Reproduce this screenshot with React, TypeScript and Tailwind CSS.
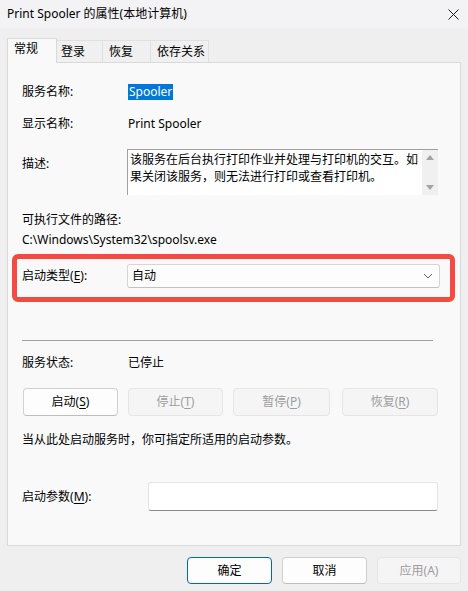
import React from "react";

const font = {
  fontFamily: '"Segoe UI", "Noto Sans", "Noto Sans CJK SC", sans-serif',
};

function Key({ k }: { k: string }) {
  return (
    <>
      (<span className="underline underline-offset-2">{k}</span>)
    </>
  );
}

function Btn({
  children,
  disabled,
  primary,
  className,
}: {
  children: React.ReactNode;
  disabled?: boolean;
  primary?: boolean;
  className?: string;
}) {
  const base =
    "flex items-center justify-center rounded-[4px] border text-[12px] ";
  const look = disabled
    ? "bg-[#f5f5f5] border-[#e5e5e5] text-[#9d9d9d]"
    : primary
    ? "bg-[#fdfdfd] border-[#0067c0] text-black"
    : "bg-[#fdfdfd] border-[#d0d0d0] border-b-[#bdbdbd] text-black";
  return <div className={base + look + " " + (className ?? "")}>{children}</div>;
}

export default function App() {
  return (
    <div
      className="w-[468px] h-[591px] bg-[#efefef] flex flex-col text-[12px] text-black overflow-hidden"
      style={font}
    >
      {/* title bar */}
      <div className="h-[28px] bg-[#f3f3f5] flex items-center justify-between pl-[7px] pr-[9px] shrink-0">
        <span className="text-[12px] leading-none">Print Spooler 的属性(本地计算机)</span>
        <svg width="11" height="11" viewBox="0 0 11 11" className="mt-[1px]">
          <path d="M0.5 0.5L10.5 10.5M10.5 0.5L0.5 10.5" stroke="#1a1a1a" strokeWidth="1" />
        </svg>
      </div>

      {/* tabs */}
      <div className="mt-[10px] h-[25px] flex items-end pl-[7px] shrink-0 relative z-10">
        <div className="w-[50px] h-[25px] bg-[#f9f9f9] border border-b-0 border-[#d9d9d9] pl-[6px] pt-[2px] leading-[16px]">
          常规
        </div>
        <div className="w-[46px] h-[22px] mb-[1px] bg-[#f0f0f0] border border-l-0 border-b-0 border-[#e0e0e0] pl-[4px] pt-[3px] leading-[16px]">
          登录
        </div>
        <div className="w-[48px] h-[22px] mb-[1px] bg-[#f0f0f0] border border-l-0 border-b-0 border-[#e0e0e0] pl-[6px] pt-[3px] leading-[16px]">
          恢复
        </div>
        <div className="w-[58px] h-[22px] mb-[1px] bg-[#f0f0f0] border border-l-0 border-b-0 border-[#e0e0e0] pl-[6px] pt-[3px] leading-[16px]">
          依存关系
        </div>
      </div>

      {/* panel */}
      <div className="mx-[7px] -mt-[1px] h-[484px] bg-[#f9f9f9] border border-[#d9d9d9] pl-[14px] flex flex-col shrink-0">
        <div className="mt-[20px] h-[18px] flex items-center">
          <span className="w-[106px]">服务名称:</span>
          <span className="bg-[#0078d7] text-white h-[16px] leading-[16px] px-[1px]">Spooler</span>
        </div>
        <div className="mt-[14px] h-[18px] flex items-center">
          <span className="w-[106px]">显示名称:</span>
          <span>Print Spooler</span>
        </div>
        <div className="mt-[16px] h-[46px] flex items-start">
          <span className="w-[105px] mt-[6px] leading-[18px]">描述:</span>
          <div className="w-[311px] h-[46px] bg-white border-t border-l border-[#a0a0a0] flex">
            <div className="flex-1 pl-[2px] pt-[1px] leading-[17px] text-[12px]">
              该服务在后台执行打印作业并处理与打印机的交互。如果关闭该服务，则无法进行打印或查看打印机。
            </div>
            <div className="w-[16px] h-full bg-[#f0f0f0] flex flex-col items-center justify-between py-[5px]">
              <svg width="8" height="5" viewBox="0 0 8 5">
                <path d="M4 0L8 5H0Z" fill="#a3a3a3" />
              </svg>
              <svg width="8" height="5" viewBox="0 0 8 5">
                <path d="M0 0H8L4 5Z" fill="#a3a3a3" />
              </svg>
            </div>
          </div>
        </div>
        <div className="mt-[16px] h-[18px] flex items-center">可执行文件的路径:</div>
        <div className="mt-[2px] h-[18px] flex items-center">C:\Windows\System32\spoolsv.exe</div>

        {/* highlighted row */}
        <div className="mt-[5px] -ml-[10px] mr-[5px] h-[48px] border-[5px] border-[#f24b41] rounded-[6px] pl-[5px] pr-[10px] pt-[5px]">
          <div className="h-[24px] flex items-center">
            <span className="w-[105px]">
              启动类型<Key k="E" />:
            </span>
            <div className="flex-1 h-[24px] bg-[#fdfdfd] border border-[#d5d5d5] border-b-[#c2c2c2] rounded-[3px] flex items-center justify-between pl-[4px] pr-[6px]">
              <span>自动</span>
              <svg width="10" height="6" viewBox="0 0 10 6">
                <path d="M1 1L5 5L9 1" fill="none" stroke="#5f5f5f" strokeWidth="1" />
              </svg>
            </div>
          </div>
        </div>

        <div className="mt-[38px] h-px w-[411px] bg-[#a0a0a0]" />
        <div className="mt-[13px] h-[18px] flex items-center">
          <span className="w-[106px]">服务状态:</span>
          <span>已停止</span>
        </div>
        <div className="mt-[16px] h-[28px] flex">
          <Btn className="ml-[1px] w-[95px]">
            启动<Key k="S" />
          </Btn>
          <Btn disabled className="ml-[10px] w-[95px]">
            停止<Key k="T" />
          </Btn>
          <Btn disabled className="ml-[10px] w-[97px]">
            暂停<Key k="P" />
          </Btn>
          <Btn disabled className="ml-[12px] w-[96px]">
            恢复<Key k="R" />
          </Btn>
        </div>
        <div className="mt-[15px] h-[18px] flex items-center">
          当从此处启动服务时，你可指定所适用的启动参数。
        </div>
        <div className="mt-[33px] h-[29px] flex items-center">
          <span className="w-[126px]">
            启动参数<Key k="M" />:
          </span>
          <div className="w-[290px] h-[29px] bg-white border border-[#e5e5e5] border-b-[#8a8a8a] rounded-[3px]" />
        </div>
      </div>

      {/* bottom buttons */}
      <div className="mt-[11px] flex justify-end pr-[7px] gap-[10px]">
        <Btn primary className="w-[85px] h-[27px]">确定</Btn>
        <Btn className="w-[85px] h-[27px]">取消</Btn>
        <Btn disabled className="w-[84px] h-[27px]">应用(A)</Btn>
      </div>
    </div>
  );
}
